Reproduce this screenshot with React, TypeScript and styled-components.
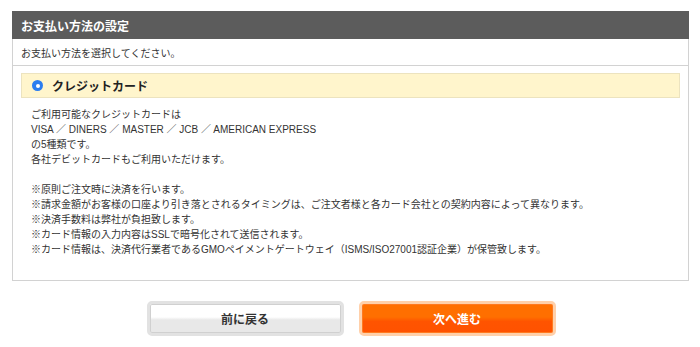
import React from "react";
import styled, { createGlobalStyle, css } from "styled-components";

const GlobalStyle = createGlobalStyle`
  html, body {
    margin: 0;
    padding: 0;
    background: #fff;
  }
  body {
    font-family: "Liberation Sans", "Noto Sans CJK JP", sans-serif;
    color: #333;
  }
`;

const Page = styled.div`
  padding: 11px 11px 0 12px;
`;

const Panel = styled.section`
  border: 1px solid #d2d2d2;
  border-top: none;
`;

const PanelTitle = styled.h2`
  margin: 0;
  height: 28px;
  background: #5c5c5c;
  color: #fff;
  font-size: 12px;
  font-weight: bold;
  display: flex;
  align-items: center;
  padding: 0 9px;
  margin: 0 -1px;
`;

const Lead = styled.p`
  margin: 0;
  height: 26px;
  display: flex;
  align-items: center;
  padding: 0 8px;
  font-size: 10px;
  border-bottom: 1px solid #d2d2d2;
`;

const Body = styled.div`
  padding: 7px 8px 23px;
`;

const Option = styled.label`
  display: flex;
  align-items: center;
  gap: 9px;
  height: 23px;
  padding: 0 10px;
  background: #fff5cc;
  border: 1px solid #ece3bf;
  font-size: 12px;
  font-weight: bold;
  color: #222;
`;

const Radio = styled.span`
  width: 11px;
  height: 11px;
  border-radius: 50%;
  background: #2b7df0;
  display: flex;
  align-items: center;
  justify-content: center;
  &::after {
    content: "";
    width: 4px;
    height: 4px;
    border-radius: 50%;
    background: #fff;
  }
`;

const Info = styled.div`
  padding: 9px 0 0 10px;
  font-size: 10px;
  line-height: 15px;
`;

const Block = styled.p`
  margin: 0 0 15px;
  &:last-child {
    margin-bottom: 0;
  }
`;

const Actions = styled.div`
  display: flex;
  justify-content: center;
  gap: 15px;
  padding-top: 20px;
  padding-left: 1px;
`;

const Button = styled.button<{ primary?: boolean }>`
  width: 197px;
  height: 35px;
  border-radius: 5px;
  border: 3px solid #e2e2e2;
  font-family: inherit;
  font-size: 12px;
  font-weight: bold;
  color: #333;
  background: linear-gradient(#fff 0%, #fff 45%, #e8e8e8 55%, #e8e8e8 100%);
  box-shadow: inset 0 0 0 1px #d0d0d0;
  cursor: pointer;

  ${({ primary }) =>
    primary &&
    css`
      border-color: #ffd0aa;
      color: #fff;
      background: linear-gradient(#ff6f00 0%, #ff6f00 45%, #ff5400 60%, #ff5200 100%);
      box-shadow: inset 0 0 0 1px #ff7a20;
    `};
`;

const notes = [
  "※原則ご注文時に決済を行います。",
  "※請求金額がお客様の口座より引き落とされるタイミングは、ご注文者様と各カード会社との契約内容によって異なります。",
  "※決済手数料は弊社が負担致します。",
  "※カード情報の入力内容はSSLで暗号化されて送信されます。",
  "※カード情報は、決済代行業者であるGMOペイメントゲートウェイ（ISMS/ISO27001認証企業）が保管致します。"
];

const App: React.FC = () => (
  <Page>
    <GlobalStyle />
    <Panel>
      <PanelTitle>お支払い方法の設定</PanelTitle>
      <Lead>お支払い方法を選択してください。</Lead>
      <Body>
        <Option>
          <Radio />
          クレジットカード
        </Option>
        <Info>
          <Block>
            ご利用可能なクレジットカードは
            <br />
            VISA ／ DINERS ／ MASTER ／ JCB ／ AMERICAN EXPRESS
            <br />
            の5種類です。
            <br />
            各社デビットカードもご利用いただけます。
          </Block>
          <Block>
            {notes.map(n => (
              <React.Fragment key={n}>
                {n}
                <br />
              </React.Fragment>
            ))}
          </Block>
        </Info>
      </Body>
    </Panel>
    <Actions>
      <Button>前に戻る</Button>
      <Button primary>次へ進む</Button>
    </Actions>
  </Page>
);

export default App;
